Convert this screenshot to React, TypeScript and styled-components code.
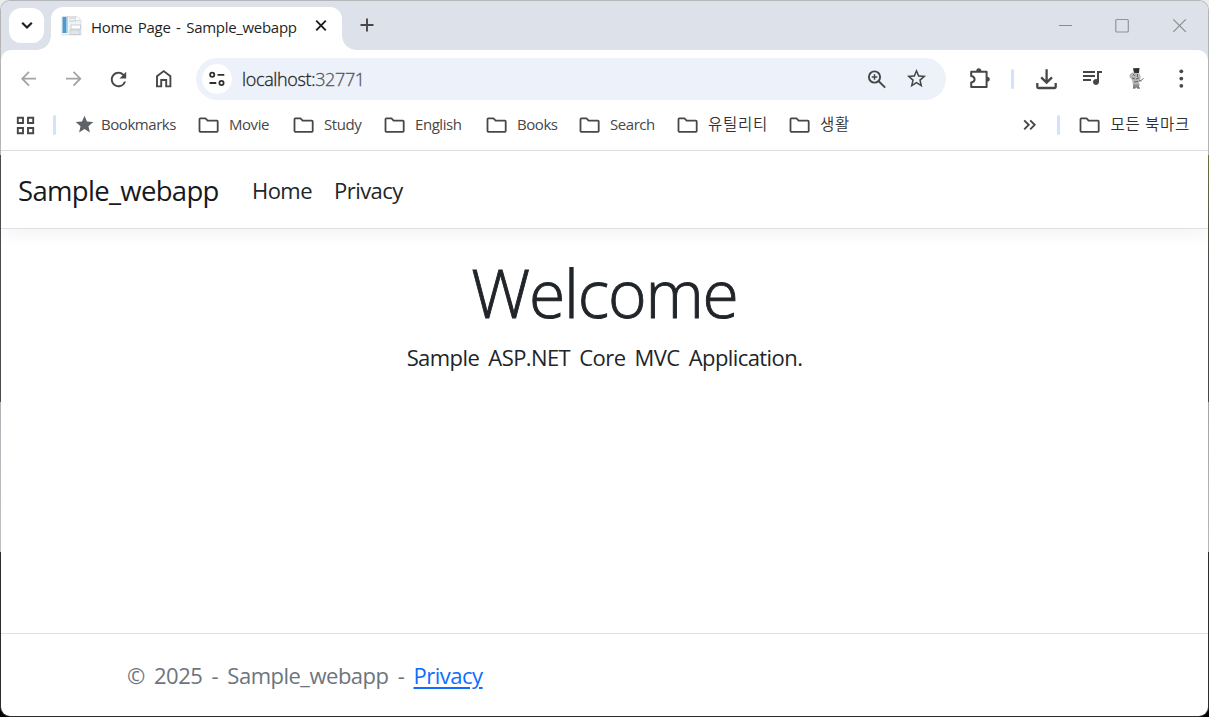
import React from "react";
import styled, { createGlobalStyle } from "styled-components";
import { MdOutlineStarBorder, MdQueueMusic, MdRefresh, MdStar } from "react-icons/md";

const GlobalStyle = createGlobalStyle`
  *, *::before, *::after { box-sizing: border-box; }
  body {
    margin: 0;
    background: linear-gradient(#ececec 20px, #000 20px) no-repeat #000;
    font-family: "Open Sans", "Noto Sans CJK KR", sans-serif;
  }
`;

const Desktop = styled.div`
  width: 1209px;
  height: 717px;
  padding: 1px;
  overflow: hidden;
  border-radius: 10px;
  background:
    linear-gradient(#b4b6b9, #b4b6b9) 0 0 / 100% 12px no-repeat,
    linear-gradient(#b4b4b4 155px, #4c4a4d 155px 402px, #b0b2b8 402px, #c0c0c3 552px, #2c2c30 552px) 0 0 / 1px 100% no-repeat,
    linear-gradient(#b4b4b4 155px, #6f7044 155px, #4a4c45 250px, #454648 402px, #a4a4a8 402px, #b8b8bb 552px, #2c2c30 552px) 100% 0 / 1px 100% no-repeat,
    #2c2c30;
`;

const BrowserWindow = styled.div`
  height: 715px;
  display: flex;
  flex-direction: column;
  overflow: hidden;
  border-radius: 9px;
  background: #fff;
`;

const TabStrip = styled.div`
  height: 49px;
  flex: none;
  display: flex;
  align-items: flex-start;
  background: #dde1e9;
`;

const TabSearch = styled.button`
  width: 35px;
  height: 35px;
  margin: 7px 7px 0 8px;
  padding: 0;
  border: 0;
  border-radius: 12px;
  display: grid;
  place-items: center;
  background: #fff;
`;

const Tab = styled.div`
  position: relative;
  width: 291px;
  height: 43px;
  margin-top: 6px;
  padding: 7px 12px 0 10px;
  display: flex;
  align-items: flex-start;
  border-radius: 12px 12px 0 0;
  background: #fff;

  &::before,
  &::after {
    content: "";
    position: absolute;
    bottom: 0;
    width: 14px;
    height: 14px;
  }
  &::before {
    left: -14px;
    background: radial-gradient(circle at 0 0, transparent 13.5px, #fff 14px);
  }
  &::after {
    right: -14px;
    background: radial-gradient(circle at 100% 0, transparent 13.5px, #fff 14px);
  }
`;

const TabTitle = styled.span`
  flex: 1;
  margin-left: 9px;
  white-space: nowrap;
  font-size: 15px;
  line-height: 26px;
  letter-spacing: -0.3px;
  word-spacing: 2px;
  color: #1f1f1f;
`;

const SiteIcon = styled.svg`
  margin-top: 1px;
`;

const CloseIcon = styled.svg`
  margin: 4px 1px 0 0;
`;

const NewTab = styled.div`
  margin: 15px 0 0 16px;
  height: 18px;
`;

const WindowButtons = styled.div`
  margin: 14px 18px 0 auto;
  display: flex;
  gap: 37px;
`;

const ToolbarBack = styled.div`
  flex: none;
  background: #dde1e9;
`;

const Toolbar = styled.div`
  height: 58px;
  padding-left: 5px;
  display: flex;
  align-items: center;
  border-radius: 10px 10px 0 0;
  background: #fff;
`;

const Slot = styled.div<{ $color?: string }>`
  width: 45px;
  flex: none;
  display: flex;
  justify-content: center;
  color: ${(p) => p.$color ?? "#474747"};
`;

const Omnibox = styled.div`
  width: 750px;
  height: 42px;
  margin: 0 11px 0 10px;
  padding: 0 18px 0 6px;
  display: flex;
  align-items: center;
  border-radius: 21px;
  background: #ecf1fa;
  color: #474747;
`;

const SiteInfo = styled.div`
  width: 30px;
  height: 30px;
  border-radius: 50%;
  background: #fff;
`;

const Url = styled.span`
  flex: 1;
  margin-left: 10px;
  font-size: 18px;
  font-weight: 300;
  letter-spacing: -0.35px;
  color: #1f1f1f;
  -webkit-text-stroke: 0.3px currentColor;
`;

const Port = styled.span`
  color: #55575b;
`;

const OmniIcons = styled.div`
  display: flex;
  gap: 16px;
`;

const Divider = styled.div<{ $margin: string }>`
  width: 3px;
  height: 20px;
  flex: none;
  margin: ${(p) => p.$margin};
  border-radius: 1.5px;
  background: #d3e3fd;
`;

const BookmarkBar = styled.div`
  height: 43px;
  flex: none;
  padding: 0 18px 9px 14px;
  display: flex;
  align-items: center;
  border-bottom: 1px solid #dedfe1;
  color: #474747;
`;

const Bookmark = styled.div<{ $width?: number; $gap?: number }>`
  width: ${(p) => (p.$width ? `${p.$width}px` : "auto")};
  flex: none;
  display: flex;
  align-items: center;
  gap: ${(p) => p.$gap ?? 9}px;

  svg { flex: none; }
`;

const BookmarkLabel = styled.span<{ $korean?: boolean }>`
  margin-top: -2px;
  white-space: nowrap;
  font-size: ${(p) => (p.$korean ? 15.5 : 15)}px;
  font-weight: ${(p) => (p.$korean ? 350 : 400)};
  line-height: 20px;
  letter-spacing: ${(p) => (p.$korean ? 0.7 : -0.45)}px;
  color: ${(p) => (p.$korean ? "#303030" : "#474747")};
`;

const Overflow = styled.div`
  height: 20px;
  margin-left: auto;
`;

const SiteNav = styled.header`
  height: 78px;
  flex: none;
  padding: 1px 17px 0;
  display: flex;
  align-items: center;
  white-space: nowrap;
  border-bottom: 1px solid #dee2e6;
  box-shadow: 0 5px 17px rgba(0, 0, 0, 0.05);
`;

const Brand = styled.a`
  width: 234px;
  font-size: 27.5px;
  letter-spacing: -0.68px;
  color: #17191c;
`;

const NavLink = styled.a<{ $width: number }>`
  width: ${(p) => p.$width}px;
  font-size: 22px;
  letter-spacing: -0.55px;
  color: #212529;
`;

const Main = styled.main`
  flex: 1;
  display: flex;
  flex-direction: column;
  align-items: center;
  color: #212529;
`;

const Heading = styled.h1`
  margin: 21px 0 0;
  font-size: 66px;
  line-height: 84px;
  font-weight: 300;
  letter-spacing: -1.2px;
  -webkit-text-stroke: 0.9px currentColor;
`;

const Lead = styled.p`
  margin: 7px 0 0;
  font-size: 22px;
  line-height: 32px;
  letter-spacing: -0.58px;
  word-spacing: 4px;
`;

const Footer = styled.footer`
  height: 83px;
  flex: none;
  padding: 0 0 0 126px;
  display: flex;
  align-items: center;
  border-top: 1px solid #dee2e6;
  font-size: 22px;
  letter-spacing: -0.5px;
  word-spacing: 4px;
  white-space: pre;
  color: #6c757d;
`;

const FooterLink = styled.a`
  color: #0d6efd;
  text-decoration: underline;
  text-underline-offset: 3px;
  text-decoration-thickness: 2px;
`;

const stroke = (width: number) => ({ fill: "none", stroke: "currentColor", strokeWidth: width });

const FolderIcon = () => (
  <svg width="22" height="18" viewBox="0 0 22 18" {...stroke(1.8)} strokeLinejoin="round">
    <path d="M2.3 2.4H7.5L9.6 4.6H18.9Q19.7 4.6 19.7 5.4V15Q19.7 15.8 18.9 15.8H2.3Q1.5 15.8 1.5 15V3.2Q1.5 2.4 2.3 2.4Z" />
  </svg>
);

const Favicon = () => (
  <SiteIcon width="21" height="21" viewBox="0 0 21 21">
    <path d="M1 1.5H16L20 5V20H1Z" fill="#f1f2f4" stroke="#d5d8dc" strokeWidth=".7" />
    <rect x="1.5" y="2" width="4" height="16" fill="#4a9bd1" />
    <path d="M6.5 1V18M8 3H14M8 6H15" stroke="#c9cdd2" strokeWidth="1" />
    <path d="M14.5 1V5.5H19" fill="#fff" stroke="#cdd0d5" strokeWidth=".8" />
    <rect x="10" y="10" width="9.5" height="4" fill="#fff" stroke="#c4c8ce" strokeWidth=".9" />
    <rect x="9" y="15" width="10" height="4.5" fill="#e1e4e9" stroke="#c4c8ce" strokeWidth=".8" />
  </SiteIcon>
);

const AvatarIcon = () => (
  <svg width="25" height="24" viewBox="0 0 25 24">
    <path d="M9 1.2 15.5 1 15 6H10Z" fill="#303030" />
    <path d="M8.5 5.5Q5 7 5.5 10L8 13 9 18H15.5L15 14Q18 11 15.5 6.5Z" fill="#b5b5b5" />
    <path d="M9 7 11 9M13.5 7V10M8 11 11 12M12 12 15 11M10 15 14 14.5" stroke="#666" strokeWidth="1" />
    <path d="M15.5 14.5 19.5 11.5M15 13.5 17.5 14" stroke="#777" strokeWidth="1" />
    <path d="M9 17.5H15.5L14.8 20.8H9Z" fill="#8a8a8a" />
    <path d="M9 21H11.5M13 21H16" stroke="#444" strokeWidth="1" />
  </svg>
);

const QueueIcon = styled(MdQueueMusic)`
  margin-bottom: 4px;
`;

const bookmarks = [
  { label: "Movie", width: 95 },
  { label: "Study", width: 91 },
  { label: "English", width: 102 },
  { label: "Books", width: 93 },
  { label: "Search", width: 98 },
  { label: "유틸리티", width: 112, korean: true },
  { label: "생활", width: 70, korean: true },
];

export default function App() {
  return (
    <>
      <GlobalStyle />
      <Desktop>
        <BrowserWindow>
          <TabStrip>
            <TabSearch aria-label="Search tabs">
              <svg width="35" height="35" viewBox="0 0 35 35" {...stroke(2.2)} color="#1f1f1f">
                <path d="M13.2 14.8 18 19.5 22.8 14.8" />
              </svg>
            </TabSearch>
            <Tab>
              <Favicon />
              <TabTitle>Home Page - Sample_webapp</TabTitle>
              <CloseIcon width="16" height="16" viewBox="0 0 16 16" {...stroke(1.9)} color="#1f1f1f">
                <path d="M3.2 2.7 12.8 12.3M12.8 2.7 3.2 12.3" />
              </CloseIcon>
            </Tab>
            <NewTab>
              <svg width="18" height="18" viewBox="0 0 18 18" {...stroke(1.9)} color="#474747">
                <path d="M9 2.5V15.5M2.5 9H15.5" />
              </svg>
            </NewTab>
            <WindowButtons>
              <svg width="20" height="20" viewBox="0 0 20 20" {...stroke(1)} color="#8a8c90">
                <path d="M3 10.5H16" />
              </svg>
              <svg width="20" height="20" viewBox="0 0 20 20" {...stroke(1.2)} color="#929499">
                <rect x="2.8" y="4.5" width="12.5" height="12.5" rx="1" />
              </svg>
              <svg width="20" height="20" viewBox="0 0 20 20" {...stroke(1.2)} color="#8a8c90">
                <path d="M3.3 4.3 15.8 16.8M15.8 4.3 3.3 16.8" />
              </svg>
            </WindowButtons>
          </TabStrip>

          <ToolbarBack>
            <Toolbar>
              <Slot $color="#a4a4a4">
                <svg width="25" height="24" viewBox="0 0 25 24" {...stroke(1.8)}>
                  <path d="M13 4.8 6.2 11.7 13 18.6M6.2 11.7H20" />
                </svg>
              </Slot>
              <Slot $color="#a4a4a4">
                <svg width="25" height="24" viewBox="0 0 25 24" {...stroke(1.8)}>
                  <path d="M12.5 4.8 19.3 11.7 12.5 18.6M19.3 11.7H5" />
                </svg>
              </Slot>
              <Slot><MdRefresh size={23} /></Slot>
              <Slot>
                <svg width="25" height="24" viewBox="0 0 25 24" {...stroke(1.9)}>
                  <path d="M6 9.2 12.7 4.1 19.4 9.2V19.4H15.2V13H10.2V19.4H6Z" />
                </svg>
              </Slot>
              <Omnibox>
                <SiteInfo>
                  <svg width="30" height="30" viewBox="0 0 30 30" {...stroke(1.8)} color="#303030">
                    <circle cx="10.2" cy="10.8" r="2.1" />
                    <path d="M15.5 10.8H22.3M7.5 19H14.3" />
                    <circle cx="19.5" cy="19" r="2.1" />
                  </svg>
                </SiteInfo>
                <Url>localhost:<Port>32771</Port></Url>
                <OmniIcons>
                  <svg width="24" height="24" viewBox="0 0 24 24" {...stroke(1.9)}>
                    <circle cx="9.5" cy="10" r="5.6" />
                    <path d="M13.7 14.2 20.2 20.6" />
                    <path d="M9.5 7.2V12.8M6.7 10H12.3" strokeWidth="1.5" />
                  </svg>
                  <MdOutlineStarBorder size={23} />
                </OmniIcons>
              </Omnibox>
              <Slot>
                <svg width="25" height="24" viewBox="0 0 25 24" {...stroke(2)} strokeLinejoin="round">
                  <path d="M4.2 4.8H19.6V20H4.2V15.6Q7.6 15 7.6 12.3T4.2 9Z" />
                  <path d="M9.2 4Q9.5 1.2 11.8 1.2T14.4 4ZM20 9.8Q22.8 10 22.8 12.3T20 14.8Z" fill="currentColor" stroke="none" />
                </svg>
              </Slot>
              <Divider $margin="0 10px 0 9px" />
              <Slot>
                <svg width="25" height="24" viewBox="0 0 25 24" {...stroke(2.3)}>
                  <path d="M12.6 2.3V15M7.2 10.4 12.6 15.6 18 10.4M3.3 16V20Q3.3 21 4.3 21H20.7Q21.7 21 21.7 20V16" />
                </svg>
              </Slot>
              <Slot><QueueIcon size={24} /></Slot>
              <Slot><AvatarIcon /></Slot>
              <Slot>
                <svg width="25" height="24" viewBox="0 0 25 24" fill="currentColor">
                  <circle cx="12.3" cy="4.3" r="1.9" />
                  <circle cx="12.3" cy="11.6" r="1.9" />
                  <circle cx="12.3" cy="18.8" r="1.9" />
                </svg>
              </Slot>
            </Toolbar>
          </ToolbarBack>

          <BookmarkBar>
            <svg width="20" height="20" viewBox="0 0 20 20" {...stroke(1.9)}>
              <path d="M2.8 2.8H8V8H2.8ZM13 2.8H18.2V8H13ZM2.8 13H8V18.2H2.8ZM13 13H18.2V18.2H13Z" />
            </svg>
            <Divider $margin="0 18px 0 18px" />
            <Bookmark $width={124} $gap={6}>
              <MdStar size={21} color="#5f6368" />
              <BookmarkLabel>Bookmarks</BookmarkLabel>
            </Bookmark>
            {bookmarks.map((b) => (
              <Bookmark key={b.label} $width={b.width}>
                <FolderIcon />
                <BookmarkLabel $korean={b.korean}>{b.label}</BookmarkLabel>
              </Bookmark>
            ))}
            <Overflow>
              <svg width="16" height="20" viewBox="0 0 16 20" {...stroke(1.9)}>
                <path d="M2.2 5.3 6.7 9.8 2.2 14.3M8.2 5.3 12.7 9.8 8.2 14.3" />
              </svg>
            </Overflow>
            <Divider $margin="0 19px 0 19px" />
            <Bookmark>
              <FolderIcon />
              <BookmarkLabel $korean>모든 북마크</BookmarkLabel>
            </Bookmark>
          </BookmarkBar>

          <SiteNav>
            <Brand>Sample_webapp</Brand>
            <NavLink $width={82}>Home</NavLink>
            <NavLink $width={70}>Privacy</NavLink>
          </SiteNav>
          <Main>
            <Heading>Welcome</Heading>
            <Lead>Sample ASP.NET Core MVC Application.</Lead>
          </Main>
          <Footer>
            © 2025 - Sample_webapp - <FooterLink>Privacy</FooterLink>
          </Footer>
        </BrowserWindow>
      </Desktop>
    </>
  );
}
